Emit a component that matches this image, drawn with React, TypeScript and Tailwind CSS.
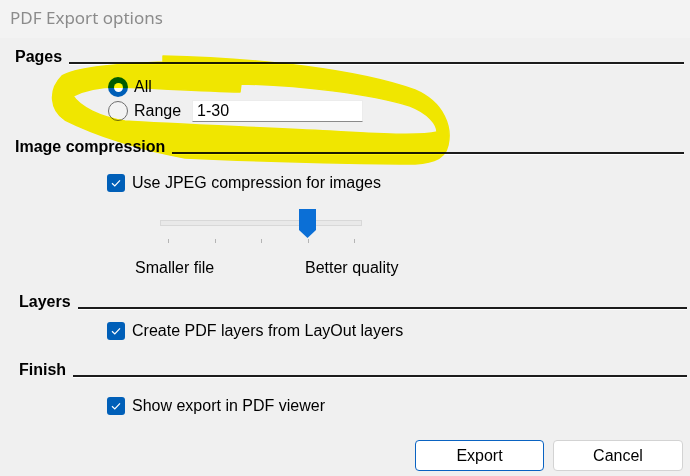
import React from "react";

const FONT = "font-['Liberation_Sans',Arial,sans-serif]";

function Heading({ label, inset }: { label: string; inset: "a" | "b" }) {
  return (
    <div
      className={`flex h-[18px] items-end gap-[7px] ${
        inset === "a" ? "pl-[15px] pr-[6px]" : "pl-[19px] pr-[3px]"
      }`}
    >
      <span className="text-[16px] font-bold leading-[18px] text-black">{label}</span>
      <div className="mb-[2px] h-[2px] flex-1 bg-[#1c1c1c] shadow-[0_1px_0_#ffffff]" />
    </div>
  );
}

function Check({ label }: { label: string }) {
  return (
    <div className="flex h-[18px] items-center gap-[7px] pl-[107px]">
      <span className="flex h-[18px] w-[18px] items-center justify-center rounded-[3px] bg-[#005fb8]">
        <svg width="10" height="8" viewBox="0 0 10 8">
          <path d="M1 4.3 L3.8 7 L9 1.3" stroke="#ffffff" strokeWidth="1.2" fill="none" />
        </svg>
      </span>
      <span className="text-[16px] leading-[18px] text-black">{label}</span>
    </div>
  );
}

function Radio({ on }: { on: boolean }) {
  return on ? (
    <span className="flex h-[20px] w-[20px] items-center justify-center rounded-full bg-[#005fb8]">
      <span className="h-[9px] w-[9px] rounded-full bg-white" />
    </span>
  ) : (
    <span className="h-[20px] w-[20px] rounded-full border border-[#6e6e6e] bg-[#f3f3f3]" />
  );
}

function QualitySlider() {
  return (
    <div className="ml-[160px] w-[202px]">
      <div className="relative h-[29px]">
        <div className="absolute left-0 right-0 top-[11px] h-[6px] border border-[#d8d8d8] bg-[#e9e9e9]" />
        <svg className="absolute left-[139px] top-0" width="17" height="29" viewBox="0 0 17 29">
          <path d="M0 0 H17 V21 L8.5 29 L0 21 Z" fill="#0b6fd6" />
        </svg>
      </div>
      <div className="mt-[1px] flex w-[195px] justify-between pl-[8px]">
        {[0, 1, 2, 3, 4].map((i) => (
          <span key={i} className="h-[4px] w-px bg-[#b4b4b4]" />
        ))}
      </div>
    </div>
  );
}

export default function App() {
  return (
    <div className={`relative h-[476px] w-[690px] overflow-hidden bg-[#f0f0f0] ${FONT}`}>
      <div className="flex h-[38px] items-center bg-[#f3f3f3] pl-[10px] pb-[3px]">
        <span className="font-['Noto_Sans',sans-serif] text-[17px] text-[#8b8b8b]">PDF Export options</span>
      </div>

      <div className="mt-[10px]">
        <Heading label="Pages" inset="a" />

        <div className="mt-[11px] flex h-[20px] items-center gap-[6px] pl-[108px]">
          <Radio on />
          <span className="text-[16px] leading-[18px] text-black">All</span>
        </div>
        <div className="mt-[3px] flex h-[22px] items-center pl-[108px]">
          <Radio on={false} />
          <span className="ml-[6px] w-[58px] text-[16px] leading-[18px] text-black">Range</span>
          <div className="flex h-[22px] w-[171px] items-center border border-[#ececec] border-b-[#8a8a8a] bg-white pl-[4px] text-[16px] text-black">
            1-30
          </div>
        </div>

        <div className="mt-[16px]">
          <Heading label="Image compression" inset="a" />
        </div>
        <div className="mt-[18px]">
          <Check label="Use JPEG compression for images" />
        </div>
        <div className="mt-[17px]">
          <QualitySlider />
        </div>
        <div className="mt-[16px] flex h-[18px] text-[16px] leading-[18px] text-black">
          <span className="ml-[135px] w-[170px]">Smaller file</span>
          <span>Better quality</span>
        </div>

        <div className="mt-[16px]">
          <Heading label="Layers" inset="b" />
        </div>
        <div className="mt-[11px]">
          <Check label="Create PDF layers from LayOut layers" />
        </div>

        <div className="mt-[21px]">
          <Heading label="Finish" inset="b" />
        </div>
        <div className="mt-[18px]">
          <Check label="Show export in PDF viewer" />
        </div>

        <div className="mt-[25px] flex justify-end gap-[9px] pr-[7px]">
          <button className="flex h-[31px] w-[129px] items-center justify-center rounded-[4px] border border-[#0a63c2] bg-white text-[16px] text-black">
            Export
          </button>
          <button className="flex h-[31px] w-[130px] items-center justify-center rounded-[4px] border border-[#d3d3d3] bg-white text-[16px] text-black">
            Cancel
          </button>
        </div>
      </div>

      {/* highlighter scribble over the Pages group */}
      <svg
        className="pointer-events-none absolute left-0 top-0 mix-blend-multiply"
        width="690"
        height="476"
        viewBox="0 0 690 476"
      >
        <path
          fillRule="evenodd"
          fill="#fff500"
          stroke="#fff500"
          strokeWidth="1.5"
          strokeLinejoin="round"
          d="M163 56 C260 58 360 70 415 90 C445 103 452 128 448 145 C445 160 430 165 400 164 C330 163 250 161 185 158 C140 150 95 135 65 120 C50 110 48 90 62 76 C75 68 110 64 163 62 Z
             M73 96 C85 90 100 87 117 87 C150 88 200 91 240 92 L241 84 C300 85 370 94 410 106 C428 113 437 124 437 132 C420 136 380 134 330 131 C250 127 170 124 125 121 C100 117 80 107 73 96 Z"
        />
      </svg>
    </div>
  );
}
